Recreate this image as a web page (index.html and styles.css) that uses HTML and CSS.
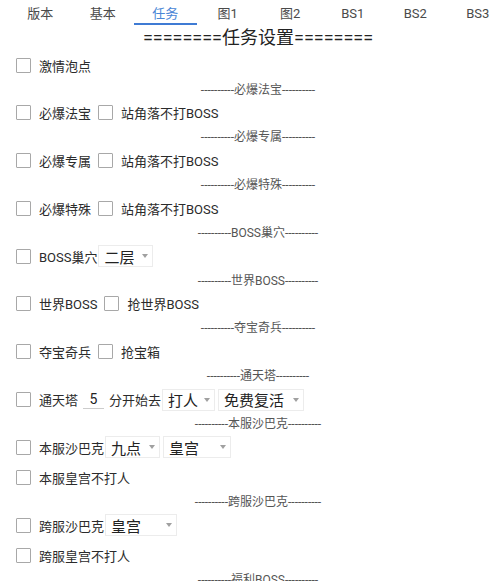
FILE: index.html
```html
<!DOCTYPE html>
<html>
<head>
<meta charset="utf-8">
<link rel="stylesheet" href="styles.css">
</head>
<body>
<div class="tabs">
  <div class="tab">版本</div>
  <div class="tab">基本</div>
  <div class="tab active">任务</div>
  <div class="tab">图1</div>
  <div class="tab">图2</div>
  <div class="tab">BS1</div>
  <div class="tab">BS2</div>
  <div class="tab">BS3</div>
</div>
<div class="content">
  <div class="title">========任务设置========</div>

  <div class="row"><span class="cb"></span><span class="lbl">激情泡点</span></div>

  <div class="sec">----------必爆法宝----------</div>
  <div class="row"><span class="cb"></span><span class="lbl">必爆法宝</span><span class="cb"></span><span class="lbl">站角落不打BOSS</span></div>

  <div class="sec">----------必爆专属----------</div>
  <div class="row"><span class="cb"></span><span class="lbl">必爆专属</span><span class="cb"></span><span class="lbl">站角落不打BOSS</span></div>

  <div class="sec">----------必爆特殊----------</div>
  <div class="row"><span class="cb"></span><span class="lbl">必爆特殊</span><span class="cb"></span><span class="lbl">站角落不打BOSS</span></div>

  <div class="sec">----------BOSS巢穴----------</div>
  <div class="row"><span class="cb"></span><span class="lbl">BOSS巢穴</span><span class="spin w55"><span class="sv">二层</span><span class="arr"></span></span></div>

  <div class="sec">----------世界BOSS----------</div>
  <div class="row"><span class="cb"></span><span class="lbl">世界BOSS</span><span class="cb"></span><span class="lbl">抢世界BOSS</span></div>

  <div class="sec">----------夺宝奇兵----------</div>
  <div class="row"><span class="cb"></span><span class="lbl">夺宝奇兵</span><span class="cb"></span><span class="lbl">抢宝箱</span></div>

  <div class="sec">----------通天塔----------</div>
  <div class="row"><span class="cb"></span><span class="lbl">通天塔</span><span class="edit">5</span><span class="lbl">分开始去</span><span class="spin w53"><span class="sv">打人</span><span class="arr"></span></span><span class="spin w86"><span class="sv">免费复活</span><span class="arr"></span></span></div>

  <div class="sec">----------本服沙巴克----------</div>
  <div class="row"><span class="cb"></span><span class="lbl">本服沙巴克</span><span class="spin w55"><span class="sv">九点</span><span class="arr"></span></span><span class="spin w68"><span class="sv">皇宫</span><span class="arr"></span></span></div>
  <div class="row"><span class="cb"></span><span class="lbl">本服皇宫不打人</span></div>

  <div class="sec">----------跨服沙巴克----------</div>
  <div class="row"><span class="cb"></span><span class="lbl">跨服沙巴克</span><span class="spin w72"><span class="sv">皇宫</span><span class="arr"></span></span></div>
  <div class="row"><span class="cb"></span><span class="lbl">跨服皇宫不打人</span></div>

  <div class="sec">----------福利BOSS----------</div>
</div>
</body>
</html>
```
FILE: styles.css
```css
html, body {
  margin: 0;
  padding: 0;
  background: #ffffff;
}
body {
  width: 500px;
  height: 581px;
  overflow: hidden;
  font-family: Roboto, "Noto Sans CJK SC", sans-serif;
  color: #333333;
}
.tabs {
  display: flex;
  height: 25px;
  padding-left: 9px;
  overflow: hidden;
}
.tab {
  flex: 0 0 62.5px;
  box-sizing: border-box;
  text-align: center;
  font-size: 13px;
  line-height: 27px;
  color: #4a4a4a;
  position: relative;
}
.tab.active {
  color: #4a86d6;
}
.tab.active::after {
  content: "";
  position: absolute;
  left: 0;
  right: 0;
  bottom: 0;
  height: 2px;
  background: #3f7bd4;
}
.content {
  padding-left: 16px;
}
.title {
  text-align: center;
  font-size: 18px;
  line-height: 25px;
  height: 25px;
  color: #222222;
}
.row {
  display: flex;
  align-items: center;
  height: 30px;
}
.cb {
  flex: 0 0 auto;
  width: 13px;
  height: 13px;
  border: 1px solid #a8a8a8;
  border-radius: 1px;
  margin-right: 8px;
}
.lbl {
  font-size: 13px;
  color: #2b2b2b;
  white-space: nowrap;
}
.lbl + .cb {
  margin-left: 7px;
}
.sec {
  box-sizing: border-box;
  text-align: center;
  font-size: 12px;
  line-height: 17px;
  height: 17.8px;
  padding-top: 1.5px;
  color: #555555;
  white-space: nowrap;
}
.spin {
  display: flex;
  align-items: center;
  box-sizing: border-box;
  height: 22px;
  border: 1px solid #ececec;
  padding-left: 5px;
  padding-right: 4px;
  margin-left: 1px;
}
.spin + .spin {
  margin-left: 3px;
}
.sv {
  font-size: 15px;
  color: #222222;
}
.arr {
  margin-left: auto;
  width: 0;
  height: 0;
  border-left: 3px solid transparent;
  border-right: 3px solid transparent;
  border-top: 4px solid #a0a0a0;
}
.w53 { width: 53px; }
.w55 { width: 55px; }
.w68 { width: 68px; }
.w72 { width: 72px; }
.w86 { width: 86px; }
.edit {
  width: 21px;
  margin: 0 5px 0 5px;
  text-align: center;
  font-size: 14px;
  color: #222222;
  border-bottom: 1px solid #cccccc;
  line-height: 18px;
}
```
